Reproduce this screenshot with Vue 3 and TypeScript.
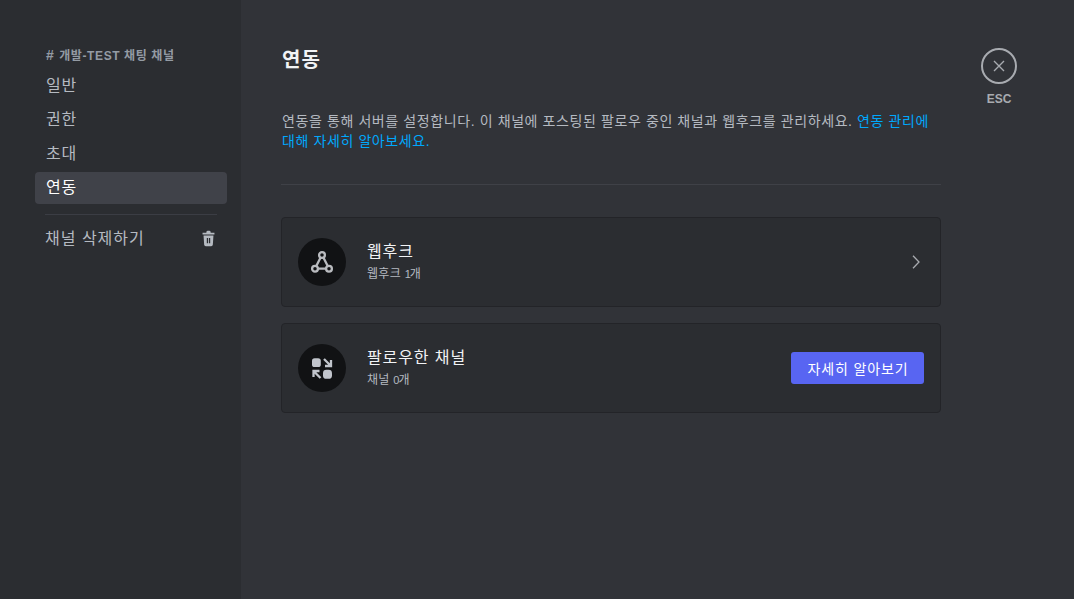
<script setup lang="ts">
const navItems = [
  { label: '일반', active: false },
  { label: '권한', active: false },
  { label: '초대', active: false },
  { label: '연동', active: true },
]
</script>

<template>
  <div class="layout">
    <aside class="sidebar">
      <nav class="nav">
        <h2 class="nav-title"><span class="hash">#</span> 개발-TEST 채팅 채널</h2>
        <div
          v-for="item in navItems"
          :key="item.label"
          class="nav-item"
          :class="{ active: item.active }"
        >
          {{ item.label }}
        </div>
        <div class="nav-sep"></div>
        <div class="nav-item delete">
          <span>채널 삭제하기</span>
          <svg class="trash" width="17" height="17" viewBox="0 0 24 24" fill="currentColor">
            <path d="M15 3.9V3a2 2 0 0 0-2-2h-2a2 2 0 0 0-2 2v.9H3.6v2.3h16.8V3.9H15Z" />
            <path fill-rule="evenodd" d="M5 7.6h14l-.9 13.1a2.3 2.3 0 0 1-2.3 2.1H8.2a2.3 2.3 0 0 1-2.3-2.1L5 7.6Zm4.6 3.6v7.6h1.8v-7.6H9.6Zm3 0v7.6h1.8v-7.6h-1.8Z" />
          </svg>
        </div>
      </nav>
    </aside>

    <main class="content">
      <div class="panel">
        <h1 class="title">연동</h1>
        <p class="desc">
          연동을 통해 서버를 설정합니다. 이 채널에 포스팅된 팔로우 중인 채널과 웹후크를 관리하세요.
          <a class="link">연동 관리에 대해 자세히 알아보세요.</a>
        </p>
        <div class="sep"></div>

        <div class="card">
          <div class="card-icon">
            <svg width="24" height="24" viewBox="0 0 24 24" fill="none" stroke="#b9bbbf" stroke-width="2.3">
              <path d="M10.6 7.6 6.4 15.8M13.4 7.6l4.2 8.2M8 18.7h8" />
              <circle cx="12" cy="5" r="2.9" />
              <circle cx="5" cy="18.7" r="2.9" />
              <circle cx="19" cy="18.7" r="2.9" />
            </svg>
          </div>
          <div class="card-text">
            <div class="card-name">웹후크</div>
            <div class="card-sub">웹후크 <span class="num">1</span>개</div>
          </div>
          <svg class="chevron" width="10" height="14" viewBox="0 0 10 14" fill="none" stroke="#a9abb0" stroke-width="1.3">
            <path d="M2 .8 8 7l-6 6.2" />
          </svg>
        </div>

        <div class="card">
          <div class="card-icon">
            <svg width="24" height="24" viewBox="0 0 24 24" fill="#c1c5cc">
              <rect x="2" y="2.2" width="8.8" height="8.8" rx="2.6" />
              <rect x="13" y="13.8" width="9" height="9" rx="3.4" />
              <g fill="none" stroke="#c1c5cc" stroke-width="2.3">
                <path d="M21 4v6h-6M21 10l-7-7" />
                <path d="M3.5 21v-6h6M3.5 15l7 7" />
              </g>
            </svg>
          </div>
          <div class="card-text">
            <div class="card-name">팔로우한 채널</div>
            <div class="card-sub">채널 <span class="num">0</span>개</div>
          </div>
          <button class="btn">자세히 알아보기</button>
        </div>
      </div>

      <div class="close">
        <div class="close-ring">
          <svg width="18" height="18" viewBox="0 0 18 18" stroke="#a8abb0" stroke-width="1.4" fill="none">
            <path d="M4 4l10 10M14 4L4 14" />
          </svg>
        </div>
        <div class="close-label">ESC</div>
      </div>
    </main>
  </div>
</template>

<style>
html,
body {
  margin: 0;
  height: 100%;
  background: #313338;
}
</style>

<style scoped>
.layout {
  display: flex;
  width: 1074px;
  height: 599px;
  overflow: hidden;
  font-family: 'Liberation Sans', 'Noto Sans CJK KR', sans-serif;
  background: #313338;
}

.sidebar {
  width: 241px;
  flex-shrink: 0;
  background: #2b2d31;
  box-sizing: border-box;
  padding: 48px 14px 0 35px;
}

.nav-title {
  margin: 0;
  padding: 0 10px 6px 11px;
  height: 16px;
  font-size: 12px;
  line-height: 16px;
  font-weight: 700;
  letter-spacing: 0.6px;
  color: #949ba4;
  white-space: nowrap;
}

.hash {
  font-size: 14px;
  font-weight: 700;
  line-height: 14px;
  letter-spacing: 1.5px;
}

.nav-item {
  display: flex;
  align-items: center;
  height: 32px;
  box-sizing: border-box;
  padding: 0 10px 4px 11px;
  margin-bottom: 2px;
  border-radius: 4px;
  font-size: 16px;
  letter-spacing: 0.9px;
  color: #b5bac1;
}

.nav-item.active {
  background: #404249;
  color: #fff;
}

.nav-sep {
  height: 1px;
  margin: 10px 10px 8px;
  background: #3b3d44;
}

.delete {
  justify-content: space-between;
  padding-left: 10px;
  letter-spacing: 1px;
}

.trash {
  color: #b5bac1;
  margin-top: 3px;
}

.content {
  flex: 1;
  display: flex;
  padding: 0 0 0 40px;
}

.panel {
  width: 660px;
  padding-top: 47px;
}

.title {
  margin: 0 0 38px;
  padding-left: 1px;
  height: 26px;
  font-size: 20px;
  line-height: 26px;
  font-weight: 700;
  letter-spacing: 1px;
  color: #f2f3f5;
}

.desc {
  margin: 0;
  padding-left: 1px;
  font-size: 14px;
  line-height: 20px;
  letter-spacing: 0.6px;
  color: #b5bac1;
}

.link {
  color: #00a8fc;
}

.sep {
  height: 1px;
  margin: 33px 0 32px;
  background: #3f4147;
}

.card {
  display: flex;
  align-items: center;
  height: 90px;
  box-sizing: border-box;
  padding: 0 16px;
  margin-bottom: 16px;
  background: #2b2d31;
  border: 1px solid #232428;
  border-radius: 4px;
}

.card-icon {
  width: 48px;
  height: 48px;
  border-radius: 50%;
  background: #111214;
  display: flex;
  align-items: center;
  justify-content: center;
  margin-right: 21px;
  flex-shrink: 0;
}

.card-text {
  flex: 1;
  padding-bottom: 1px;
}

.card-name {
  font-size: 16px;
  line-height: 20px;
  letter-spacing: 0.9px;
  color: #f2f3f5;
}

.card-sub {
  font-size: 12px;
  line-height: 16px;
  margin-top: 4px;
  letter-spacing: 0.3px;
  color: #b5bac1;
}

.num {
  font-size: 11px;
  letter-spacing: -1px;
}

.chevron {
  margin-right: 3px;
}

.btn {
  width: 133px;
  height: 32px;
  border: none;
  border-radius: 3px;
  background: #5865f2;
  color: #fff;
  font-family: inherit;
  font-size: 14px;
  letter-spacing: 0.85px;
  padding: 0 0 0 1px;
}

.close {
  margin-left: 40px;
  padding-top: 48px;
  width: 36px;
  display: flex;
  flex-direction: column;
  align-items: center;
}

.close-ring {
  width: 36px;
  height: 36px;
  box-sizing: border-box;
  border: 2px solid #a8abb0;
  border-radius: 50%;
  display: flex;
  align-items: center;
  justify-content: center;
}

.close-label {
  margin-top: 9px;
  font-size: 12px;
  line-height: 13px;
  font-weight: 600;
  color: #a8abb0;
}
</style>
